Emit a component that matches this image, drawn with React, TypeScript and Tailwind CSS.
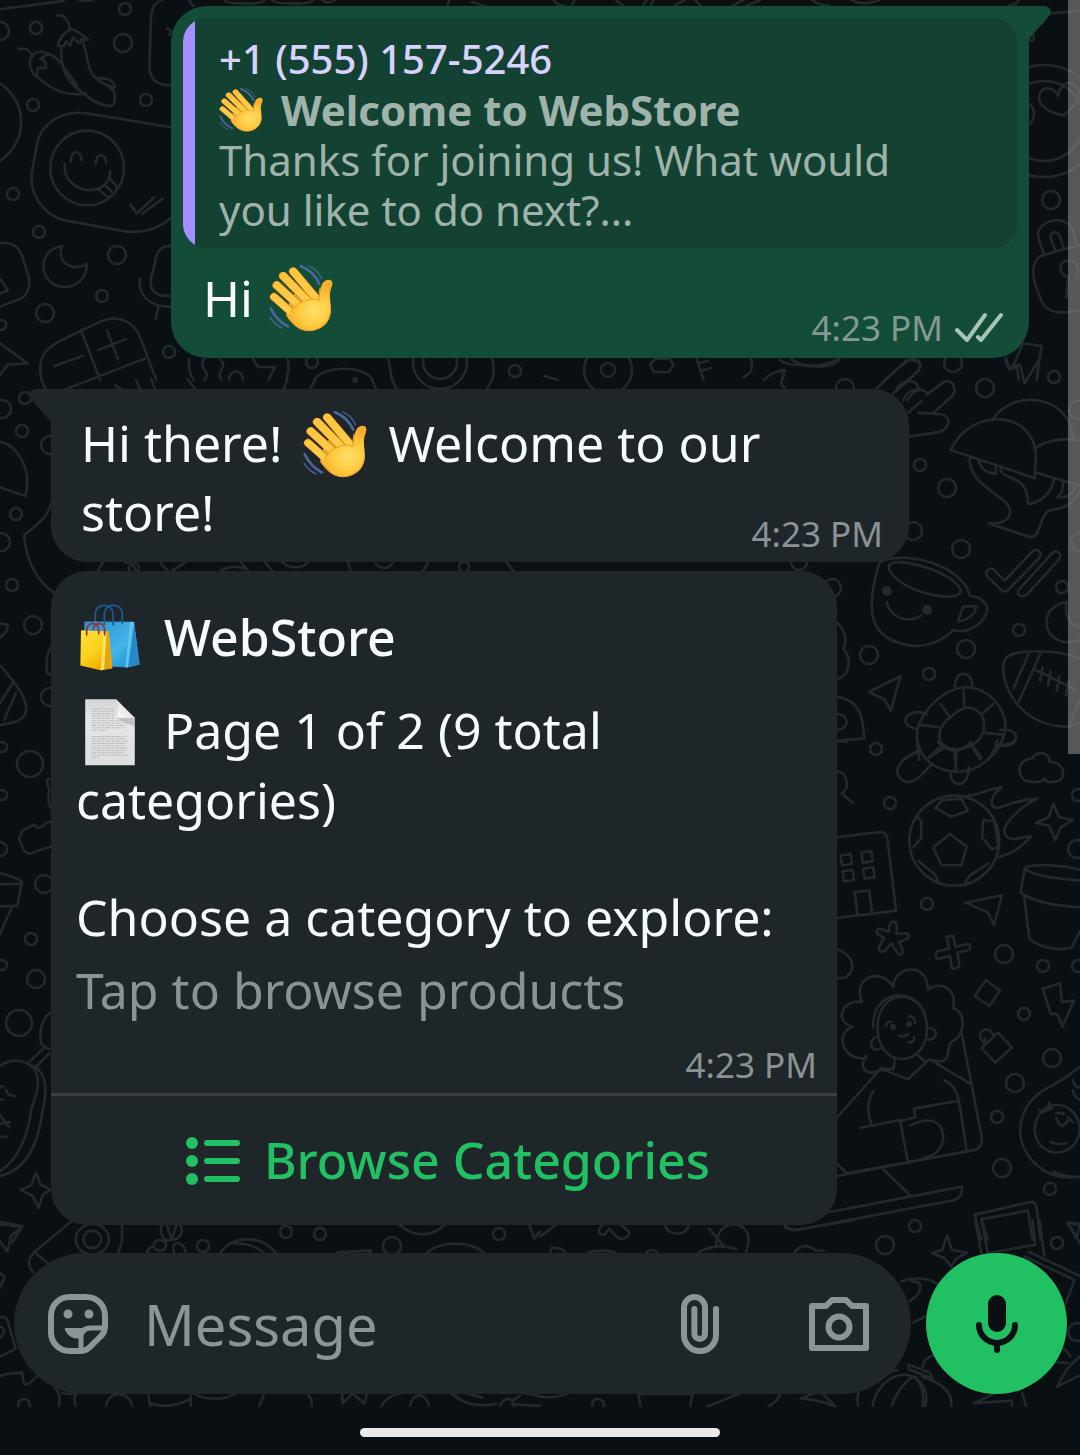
import React from "react";

const DOTS: [number, number, number][] = [
  [125, 9, 6], [36, 28, 6], [123, 43, 9], [0, 31, 9], [33, 105, 6], [146, 100, 6], [13, 194, 6],
  [39, 232, 6], [117, 255, 9], [102, 296, 6], [45, 313, 9], [169, 352, 6], [312, 362, 6], [1, 325, 5],
  [515, 371, 6], [1051, 200, 9], [608, 370, 7], [608, 370, 24], [953, 363, 9], [1054, 377, 6],
  [25, 398, 6], [2, 409, 9], [22, 431, 6], [50, 445, 9], [16, 514, 6], [1, 542, 9], [12, 585, 6],
  [33, 625, 9], [50, 697, 9], [30, 764, 13], [2, 747, 5], [2, 795, 5], [0, 849, 7], [44, 884, 9],
  [31, 939, 6], [36, 979, 9], [19, 1023, 13], [2, 965, 5], [985, 388, 9], [920, 465, 6], [947, 488, 9],
  [961, 549, 9], [913, 531, 9], [1062, 587, 6], [1019, 630, 6], [869, 655, 9], [966, 649, 9],
  [929, 674, 6], [876, 749, 6], [1078, 410, 9], [1080, 542, 9], [832, 588, 9], [845, 388, 9],
  [799, 562, 8], [890, 803, 6], [927, 904, 6], [1004, 954, 9], [1043, 966, 6], [1077, 849, 9],
  [1024, 1014, 6], [1052, 1058, 9], [1015, 1083, 9], [997, 1117, 6], [1002, 1168, 9], [1050, 1189, 6],
  [915, 1226, 6], [286, 1232, 6], [320, 1234, 6], [203, 1246, 6], [392, 1246, 9], [499, 1234, 6],
  [24, 1405, 6], [598, 1405, 6], [885, 1245, 9], [1057, 1243, 6], [1077, 1332, 9], [134, 568, 5],
  [464, 567, 5], [1078, 795, 6], [1078, 966, 6], [1044, 121, 56], [1044, 121, 40],
  [440, 362, 27], [440, 362, 17], [-25, 122, 46],
];

/* Each sheet is one area of the wallpaper, drawn on its own grid. */
const SHEETS: { at: string; lines: string[] }[] = [
  {
    at: "scale(.3444 .3333)",
    lines: [
      "M0 28L185 3M230 0q20 4 40 0M165 47c22-6 34 14 38 42M168 138c6-30 24-44 40-50 20 6 36 20 48 32l-20-2q-6 18-14 4l-10-10-8 24-12-12q-4 20-22 12zM178 145c-4 90 40 120 90 155 60 32 70 20 64-20-10-36-60-20-76-90-6-36-10-50-18-70M55 147c24-6 36 12 40 22M100 160c-20 16-18 48 6 70l4-26 24 0-4-20-12-8 22-14c-14-8-30-8-40-2zM108 230c40 40 90 60 142 50M140 162c30 6 60 60 84 98M286 235c30-4 50 14 46 28l-20-8",
      "M470 0c-24 6-30 26-32 60l-4 140c0 40 24 56 64 56M485 85l14 10-8 10M497 382L250 340c-70-10-130 30-142 90l-16 90c-6 70 40 130 100 142l170 32c60 8 100-10 135-40",
      "M146 504a107 112 0 1 0 214 0a107 112 0 1 0-214 0M205 486c2-38 30-38 32-6M278 492c2-34 28-34 30-4M188 490c-6 50 40 90 90 78 24-6 40-26 42-54M285 566l24 24c20 0 34-16 28-34l-18-20M302 552l22 22M378 614l20 26 50-48M412 642l60-46",
      "M180 738c-60 10-70 80-30 110 44 32 104 0 102-56-40 26-90-6-72-54zM0 730c40-6 58 14 66 44l18 60c6 34-10 60-34 66L0 920M0 836l24 36-24 8M0 1030l80 60-58 4-22 30M500 738c-36-4-48 24-50 50l-12 50c-4 40 20 52 60 50M406 836c-6 50 30 86 90 84M460 920l-8 36",
      "M120 1140c-10-60 0-90 60-120l100-50c60-30 110-10 130 50l44 120M235 990l56 150M135 1190l285-114M158 1098l82-30M285 1050l80-32M310 990l32 86M548 1077c0 30 4 50 14 63M592 1077c-18 40 24 30 2 63M640 1077c24 30-16 30 4 63M735 1077l14 24 50 0-20 39M835 1077c6 30 2 40-4 63M912 1140c20-40 140-50 170 0M1128 1077l10 63M1430 1077q6 30 0 63M665 1140c0-34 40-34 40 0",
      "M550 0q4 16 14 18M650 0q10 12 60 10 50 4 60-12M790 0q10 12 60 10 50 4 60-12M935 0q18 14 38 0M1300 17l4-17M1370 6l40 12",
    ],
  },
  {
    at: "translate(540) scale(.3444 .3333)",
    lines: [
      "M40 0q10 18 30 17M100 0q-4 10-8 17M220 0q18 16 24 17M310 0l-12 17M330 0l-10 17M420 0l-30 17M450 0l16 17M560 17l30-17M600 17l40-17M790 0q20 16 50 17M905 0q30 20 80 0M1360 17q20 0 30-17M1480 40l88-8M1421 120q20 8 10-20",
      "M1520 346c-50-8-84-40-66-70 14-22 40-10 50 12 4-30 30-50 50-34 24 20 2 66-34 92zM1421 312c16 10 18 40 2 60M1464 768l-18-60c-4-50 90-70 104-10l10 40M1496 752l-14-40c0-20 24-20 28 0l12 34M1568 734l-116 34c-20 20-24 40-16 80l22 60c20 34 60 34 110 22M1528 892l6-60c-30-10-30-46-4-50 30-4 40 24 26 50M1402 1030l54 8-14 102M1402 1030l-26 64M1352 1070l12 38 20-8 6 40M12 1128l40 12M320 1092l16-16h40l12 18-14 22-44 0zM455 1077l20 63M462 1090l26-8M470 1112l26-8M612 1077c10 30 0 44-20 54M730 1077c30 30 120 30 140 0M1000 1140l70-60c30-10 40 10 30 30l-30 30M650 1140q20-24 60-30l-6 30",
    ],
  },
  {
    at: "translate(0 370) scale(.3444 .3333)",
    lines: [
      "M0 214c50 14 94 80 74 164L0 352M148 400c-8 40-36 60-78 96 6 80 40 140 86 172M0 760l22 4c2 20-10 30-22 38M0 885c40 50 74 90 76 130 0 40-40 44-76 50M0 1000l36-60M12 1050l34-80M120 28l12 30M395 30l12 28M440 28l10 30M335 46l40 28M545 28l22 30M835 28l-12 30M900 58q6-12 16-28M1080 28l12 30M1138 28l14 30M1430 28l-18 30M285 602q6-14 14-25M395 602c-12-30-24-24-32-24M465 577l22 25M500 602l38-25M640 602q40-20 68-6M700 577l20 25M770 577l20 25M820 577c20 20 60 20 72 0M1010 577l8 25M1090 580q30 30 50 0M1228 602q10-10 14-25M1470 577l20 25M148 830q-20 40-10 80l14 6",
    ],
  },
  {
    at: "translate(780 360) scale(.3333)",
    lines: [
      "M0 0q20 16 60 14 60 10 110-14M0 36q16-14 10 14-14 20 4 34M290 85l90-85q30 0 40 10 0 20-12 30l-70 62M350 86c20-28 60-30 66 0-24 4-40 14-46 36M382 122c20-34 40-40 58-24M440 104l54-40c24-6 38 24 24 42l-56 52M384 158l40-34M386 230l80-12c50-6 50-56 10-56l-60-4M676 0l8 20 36-6 14 56 40-66M636 182c60-100 240-80 244 60M512 270c60-130 250-120 256 16l-4 68zM762 268c30-26 70-34 138-28M764 336l136 42M568 290c0 100 134 120 122 170-6 26-34 32-64 30l120 40c40 10 30-70 66-80 40-2 70-20 88-58M595 302c12 30 26 36 52 40l0-22M662 322c-6 44 82 10 82 110 40-4 70-34 78-72M850 366l-4 30-14 16q40 4 54-30",
      "M300 602c-50 160-30 240 100 256 40 2 90-14 120-48 60 16 110-40 100-72-14-24-30-30-50-30-20-90-190-140-270-102M326 620c10-40 214 20 216 76-20 40-206-10-216-76zM534 784l16-44 38-2c0 20-20 44-54 46zM320 726c12 50 68 66 104 40M620 648c-6-18 16-30 26-14l28 28 82-86c14-14 34 0 22 18L684 690c-6 6-16 6-20 0zM716 690l100-110c16-14 32 4 20 20L744 700c-18 18-36 4-28-10z",
      "M900 840c-70 24-110-24-98-70 6-20 30-42 58-44-8 40 8 70 40 74M900 896c-70-30-210-30-226 4-20 50 30 200 190 200l36-10M746 882l-46 104M782 880l-66 146M900 1020l-34 78M768 930l120 60M788 922l-8 40M812 934l-8 42M838 950l-8 42M866 964l-8 42M266 996l96-48-30 104-18-34zM170 786c24 24 34 50 20 80 26 30 22 80-20 92M170 1010c70 10 80 60 82 126l-80 6M170 1062c40 0 40 46 0 48M525 985c-4-60 52-54 52-8M442 1062c-70-24-90 40-30 44M660 1110c64-10 64 50 0 44M410 1130c0-60 70-140 140-148 80-6 140 80 124 136-10 40-30 60-50 82M410 1130l8 70M510 1072l24-18c44-30 90 10 76 60-12 40-60 60-100 52-54-20-30-70 0-94zM550 984l4 60M482 1032l30 42M640 1032l-36 32M416 1094l60 8M610 1118l60 6M484 1156l-42 42M574 1156l26 42M524 1172l0 28M368 1200l50-28",
    ],
  },
  {
    at: "translate(780 740) scale(.3333)",
    lines: [
      "M412 0c10 80 100 110 166 88 50-20 70-60 74-88M474 6c30 34 70 34 98 0M450 50l40-24M530 32l-4 60M574 12l30 40M420 30c-110 50-60 100-30 96 20-4 40-26 62-50M512 94c-4 50 54 56 54-12M652 14c30 10 50-2 56-14M172 4h30M736 122c-30-20-20-66 20-66 14-26 50-20 54 10 50 0 50 60 14 58-14 6-30 0-30-8-20 18-46 8-58 6zM170 94c34 4 40 50 16 66M186 160l32 28",
      "M388 302a134 134 0 1 0 270 0a134 134 0 1 0-270 0M488 180l56-4 20 36-50 18-48-26zM510 282l50 38-16 56-60 0-24-54zM610 240l34 4 12 78-20 6-30-36zM412 230l12 14 0 50-24 28M416 364l50 40 8 20M626 370l-56 36-14 20M556 168c40 0 60-20 108-26-40 34-36 70-2 60 34-14 70-24 110-26-70 36-140 110-70 122l52-10c-30 36-60 54-100 64M820 192l18 40 40 8-36 22-16 38-18-42-40-10 38-16zM170 292l130-16q18-2 22 20l26 216-178 22M182 346l30-4 4 30-30 4zM244 338l30-4 4 30-30 4zM188 394l30-4 4 30-30 4zM250 386l30-4 4 30-30 4zM232 522l-8-66 44-4 8 66M556 488l110-22-24 90-18-38zM900 390c-50-16-160-20-166-4 30 24 100 30 166 36M734 386l-12 72c40 30 110 40 178 44M732 464l16 132c34 30 90 36 126 28l26-50",
      "M334 548c8-8 18 0 16 12l0 22 26-2c14 0 14 14 4 18l-24 8 12 24c0 14-10 18-16 8l-18-28-18 22c-8 8-24 0-18-12l14-26-20-12c-6-12 2-18 12-14l22 8 2-20zM500 590l20-2 6 32 36-8c10 0 12 14 4 18l-34 8 6 34c0 14-14 14-22 14l-6-38-34 8c-12 0-10-20-2-22l34-8-8-36zM170 626c50 20 60 60 28 86l-28 4M618 720l42 32-32 46-44-30zM788 746l52-16 6 56 36-4-34 78-16-38-20 0zM604 924l50-46 42 44-50 46zM610 904c-24-20 0-44 20-32l12 14M616 896l-4 22",
      "M246 786c-30-70 50-110 94-46 0-60 100-80 104 8 50-30 90 10 74 56 40 10 40 80 2 98-16 6-14 30-18 50-14 20-34 10-50 8M246 786c-60-10-86 60-28 74-60 24-24 106 40 94M258 948c-30 50 20 60 46 40M293 876c-10-140 150-140 148-6-4 110-136 120-148 6zM280 862c-8-124 160-130 160 0M445 864c34 0 28 40-6 34M290 890c-30 10-16 50 10 36M318 858q6-18 16-12M386 830q18-4 20 20M356 886q16 8 28-4M386 908q18-2 16-16M344 960l-4 28-36-4-134 150M300 986l84 32 64-60 124 74M414 946l20 18M545 880l60 310c4 24-10 40-30 42L200 1300l-30-30M492 1020c30 14 46 40 48 90M280 1054c-20 30-20 60-6 98M240 1164l120-24 24 128M392 1156c50-24 90-20 98 30 0 40-20 60-60 68M360 1144l46-12-4-26 124-22c14-2 14 16 16 30l18 120M170 1308l400-76M310 1288l80 78M150 1416l396-76c2 20-4 34-22 40L60 1468c-20 6-36 0-46-8",
      "M900 980c-30 24-50 40-90 60-100 50-120 160-40 236 40 36 90 40 130 34M820 1296c20 10 50 14 80 16M764 1170c4-100 130-100 136 0-10 90-130 90-136 0zM778 1110q20 20 30-22M792 1114l24-10M828 1120q12-4 24 2M830 1134q10 40 34 8M862 1132q10 4 16 14M812 1206q20 10 46 4M878 1020q10 30 22 20M878 1050q4 20 22 30M604 1500l-20-76 168-38c12-2 16 6 18 20l12 94M624 1500l-20-62 140-26 14 88M862 1448l38 4-10 40z",
    ],
  },
  {
    at: "translate(0 560) scale(.3333 .4337)",
    lines: [
      "M155 505l-14 2q4 20 8 24-10 24 6 44M155 606c-10-4-20 0-26 8l-16 4-12-8-34 14-10 20 14 24c10 10 16 12 30 6l54-14M0 722q50 10 66 20l-14 56H0M0 748l66-2M34 804L0 862M155 1042c-24 10-34 30-34 60 0 16 14 24 34 26M84 1160l52-38M108 1168l40-30M84 1160q14 14 30 8M0 1166c40-20 80-10 100 4 26 30 10 60-6 96-10 60-40 120-94 142M100 1166c44 20 40 60 28 104-16 90-60 140-128 150M0 1214h10M18 1222q6 14 28 14M0 1244h10M0 1300l28-4M0 1280l28 28M0 1330h20M108 1412l14 28 30 12-24 12-12 30-18-28-38-14 34-10zM0 1532l66 6-30 36",
    ],
  },
  {
    at: "translate(0 1220) scale(.3444 .3333)",
    lines: [
      "M0 6l66 12-34 30-10 46-22-30M208 3L100 96c-20 20-20 40-4 60M100 96l38 34M220 58a48 46 0 1 0 96 0a48 46 0 1 0-96 0M242 58a26 26 0 1 0 52 0a26 26 0 1 0-52 0M354 15q4 50-10 82M470 15c-10 30 8 50 26 46 30-4 40-30 26-46M484 15l14 44 14-44M446 76a18 16 0 1 0 36 0a18 16 0 1 0-36 0M428 97q4-20 20-16M506 97c-14-40 28-34 34 0M640 97c40-54 120-50 160 0M670 70q60-4 94 27M980 97l98-6-4 6M1160 15c40 34 90 40 130 0M1240 97c40-34 120-36 164 0M1536 15l16 40 16-20M0 160q20 10 8 24l-8 20M0 292c20-4 22 6 26 24l20 70M0 320q24 6 0 34M0 410l46-24M0 468q30-10 64-10c4 30 4 44 24 30l18-18M160 506q20 16 10 54M220 520q-8 20 0 40M180 518q20 8 40 0M308 560c4-50 70-50 76 0M430 519l6 40M434 550q60 20 120-14M554 519v41M560 519c40 26 100 20 126 0M768 519l-16 41M890 519q20 20 14 41M994 519v32l30-30 34 30 8-32M1106 560q20-36 60-41M1190 560c10-50 50-40 56 0M1310 519q50 50 130 32M1350 519l50 14M1450 560q10-24 28-24 14 6 14 24M1490 540l20-12M1486 552l82 6M1520 519l48 10",
    ],
  },
  {
    at: "translate(540 1220) scale(.3444 .3333)",
    lines: [
      "M0 50L46 15M180 15c-16 20-8 30 8 28l12-16 30 30c20 0 30-10 30-20l-24-22M364 15c6 34 60 36 68 0M30 97l4-14 30 4 10 10M140 97q40-10 80 0M310 97q16-14 30 0M490 26l46 54M512 76c0-80 90-80 94-20q0 20-8 41M460 97q50-30 110-10M740 97q24-34 60-6l24 2M710 15q10 16 40 14l160-29M1182 46l14 44 44 8-32 18-14 24-20-26-36-14 30-10zM1264 0l18 104M1282 0l18 100M1430 0l8 74-140 26M1450 0l14 106M1420 96l148 72M1408 110l144 70-40 110M1532 10l36 6M1532 10l36 60M1050 184q60-20 102 6M1080 184c40 0 26 40-8 60M1084 308l36-20M1070 434l62 24 8 18-70-28zM1110 440q6-30 40-36M924 560q-10-60 30-90l84-20M966 560c10-80 90-120 130-80 24 20 30 50 22 80M1020 560q20-60 60-88M1090 470q30 40 20 90M1110 470c60 20 90 50 84 90M0 530q50 6 80-10M286 522h160M286 522l6 38M442 522l-6 38M484 560l100-41M664 560q30-20 34-41M758 536l40-17M758 536q50 2 100 24M820 519l38 41M1260 550l70-34M1260 550l110-8 0 18M1400 519l12 41M1568 410q-40 30-66 90l66-34M1500 370q30 20 40 40M1484 424q20 4 50 6",
    ],
  },
];

function Wallpaper() {
  return (
    <svg
      viewBox="0 0 1080 1407"
      aria-hidden="true"
      className="pointer-events-none absolute inset-x-0 top-0 w-full [&_*]:[vector-effect:non-scaling-stroke]"
      fill="none"
      stroke="#22282b"
      strokeWidth="2.6"
      strokeLinecap="round"
      strokeLinejoin="round"
    >
      {DOTS.map(([x, y, r], i) => (
        <circle key={i} cx={x} cy={y} r={r} />
      ))}
      {SHEETS.map((s) => (
        <g key={s.at} transform={s.at}>
          {s.lines.map((d) => (
            <path key={d} d={d} />
          ))}
        </g>
      ))}
      <g fill="#22282b" stroke="none">
        <circle cx="887" cy="591" r="5" />
        <circle cx="927" cy="610" r="5" />
        <circle cx="893" cy="1027" r="3" />
        <circle cx="909" cy="1024" r="3" />
        <circle cx="355" cy="380" r="3" />
      </g>
    </svg>
  );
}

function Wave({ className, id }: { className: string; id: string }) {
  const finger = `url(#${id}-finger)`;
  return (
    <svg viewBox="0 0 180 202" preserveAspectRatio="none" role="img" aria-label="waving hand" className={className}>
      <defs>
        <radialGradient id={`${id}-palm`} cx="128" cy="138" r="80" gradientUnits="userSpaceOnUse">
          <stop offset="0" stopColor="#ffe06a" />
          <stop offset="0.5" stopColor="#ffcd43" />
          <stop offset="1" stopColor="#f9ae2c" />
        </radialGradient>
        <linearGradient id={`${id}-finger`} x1="20" y1="30" x2="120" y2="150" gradientUnits="userSpaceOnUse">
          <stop offset="0" stopColor="#ffc240" />
          <stop offset="1" stopColor="#ffd04a" />
        </linearGradient>
      </defs>
      <g fill="none" stroke="#4a6698" strokeWidth="5" strokeLinecap="round">
        <path d="M90 4c24 10 40 26 51 52" strokeWidth="8" />
        <path d="M112 3c18 8 28 20 36 38" strokeWidth="4" />
        <path d="M5 131c12 26 26 42 48 54" strokeWidth="8" />
        <path d="M3 158c9 15 20 25 34 32" strokeWidth="4" />
      </g>
      <path
        d="M48 152L62 92l46-18 32 28c4-16 2-30 10-45 6-13 24-17 28-5 2 8-4 18-6 30-3 22 5 44 1 66-4 30-30 50-58 51-30 0-50-20-67-47z"
        fill={`url(#${id}-palm)`}
      />
      <g fill="none" strokeLinecap="round">
        <path d="M68 19L132 100" stroke="#c07a16" strokeWidth="25" />
        <path d="M68 19L132 100" stroke={finger} strokeWidth="22" />
        <path d="M40 33L112 112" stroke="#c07a16" strokeWidth="26" />
        <path d="M40 33L112 112" stroke={finger} strokeWidth="22" />
        <path d="M22 61L88 126" stroke="#c07a16" strokeWidth="26" />
        <path d="M22 61L88 126" stroke={finger} strokeWidth="22" />
        <path d="M14 96L70 148" stroke="#c07a16" strokeWidth="24" />
        <path d="M14 96L72 152" stroke={finger} strokeWidth="21" />
      </g>
      <path
        d="M57 150c8-20 26-38 48-44 12-4 26-6 35-1 6 12 2 22 12 32l16 24c-8 22-30 36-53 36-26 0-44-20-58-47z"
        fill={`url(#${id}-palm)`}
      />
      <path d="M62 142c8-18 24-30 44-36 12-4 24-4 32 0 4-14 2-26 6-38" fill="none" stroke="#eea22b" strokeWidth="3" />
      <path d="M60 164c18 30 52 46 84 24 20-14 28-34 29-54" fill="none" stroke="#f0a02c" strokeWidth="3" />
    </svg>
  );
}

function Bags() {
  return (
    <svg viewBox="0 0 180 200" role="img" aria-label="shopping bags" className="h-[67px] w-[60px] shrink-0">
      <defs>
        <linearGradient id="bag-blue" x2="1" y2="1">
          <stop offset="0" stopColor="#2d8dca" />
          <stop offset="0.6" stopColor="#43b5ea" />
          <stop offset="1" stopColor="#1c86c7" />
        </linearGradient>
        <linearGradient id="bag-gold" x2="0.6" y2="1">
          <stop offset="0" stopColor="#ffdf3c" />
          <stop offset="0.6" stopColor="#fcd11c" />
          <stop offset="1" stopColor="#f3a300" />
        </linearGradient>
      </defs>
      <g fill="none" stroke="#1b5a93" strokeWidth="5">
        <path d="M46 60V30C46-5 99-5 99 30V60" />
        <path d="M73 60V30C73-5 127-5 127 30V60" />
      </g>
      <path d="M13 52l149 1 17 128-36 9-63-4-67-40z" fill="url(#bag-blue)" />
      <path d="M162 53l17 128-36 9z" fill="#2589c8" />
      <path d="M150 53l-14 136 8 1 18-136z" fill="#5cc2ee" />
      <g fill="none" stroke="#1b5a93" strokeWidth="5">
        <path d="M99 50V64M73 50V62M127 50V60" />
      </g>
      <path d="M3 78l83 4 11 110-35 6-61-14z" fill="url(#bag-gold)" />
      <path d="M86 82l11 110-35 6 8-112z" fill="#e8a50b" />
      <path d="M70 84L62 198l10-2 8-112z" fill="#ffe35a" />
      <g fill="none" stroke="#a42a22" strokeWidth="5">
        <path d="M20 94V78c0-26 36-26 36 0v12" />
        <path d="M40 78c0-26 34-26 34 0v16" />
      </g>
    </svg>
  );
}

function Page() {
  const rows = [30, 37, 44, 51, 58, 65, 72, 79, 86, 93, 112, 119, 126, 133, 140, 147, 154, 161, 168, 175];
  return (
    <svg viewBox="0 0 148 200" role="img" aria-label="page" className="mr-6 ml-1 inline-block h-[67px] w-[60px] align-[-17px]">
      <defs>
        <linearGradient id="sheet" y2="1" x2="0">
          <stop offset="0" stopColor="#d4d4d4" />
          <stop offset="0.3" stopColor="#e6e6e6" />
          <stop offset="1" stopColor="#dedede" />
        </linearGradient>
        <linearGradient id="fold" x1="0" y1="1" x2="0.6" y2="0.3">
          <stop offset="0" stopColor="#ffffff" />
          <stop offset="1" stopColor="#dddddd" />
        </linearGradient>
      </defs>
      <path d="M0 1h92l56 56v141H0z" fill="url(#sheet)" />
      <path d="M90 56h58v26z" fill="#a8a8a8" opacity=".6" />
      <path d="M92 1q8 20 5 55 26-2 51 1z" fill="url(#fold)" />
      {rows.map((y, i) => (
        <path
          key={y}
          d={`M19 ${y}H${i === 9 ? 64 : i === 19 ? 40 : i < 5 ? 86 : 128 - (i % 3) * 5}`}
          stroke="#b5b5b5"
          strokeWidth="2.5"
          strokeDasharray={i % 2 ? "14 3 9 2" : "8 2 17 3"}
        />
      ))}
    </svg>
  );
}

function Time({ className = "text-[#8a9296]" }: { className?: string }) {
  return <time className={`text-[35px] leading-10 ${className}`}>4:23 PM</time>;
}

export default function App() {
  return (
    <div className="relative flex min-h-screen flex-col overflow-hidden bg-[#0a0f13] font-['Noto_Sans',sans-serif] text-[50px] leading-[69px] text-[#f7f9fa]">
      <Wallpaper />
      <div className="absolute top-0 right-0 z-10 h-[754px] w-3 bg-[#85888b]/60" />

      <main className="relative flex flex-col items-start pt-[6px] pr-[51px] pl-[51px]">
        <article className="relative ml-[120px] self-stretch rounded-[36px] rounded-tr-none bg-[#144d37] p-3 pb-[10px]">
          <svg viewBox="0 0 24 36" aria-hidden="true" className="absolute top-0 left-full -ml-[2px] h-9 w-6" fill="#144d37">
            <path d="M0 0h18q8 2 5 9L2 33v3H0z" />
          </svg>
          <blockquote className="flex overflow-hidden rounded-3xl bg-[#144232] text-[42px] leading-[50px] text-[#a0b3ab]">
            <div className="w-3 shrink-0 bg-[#a58fff]" />
            <div className="min-w-0 pt-[15px] pr-4 pb-[13px] pl-6">
              <div className="text-[40px] leading-[52px] font-medium text-[#d8d2ff]">+1 (555) 157-5246</div>
              <div className="flex items-center gap-[18px] font-bold">
                <Wave id="wave-quote" className="h-11 w-11" />
                Welcome to WebStore
              </div>
              <p>
                Thanks for joining us! What would
                <br />
                you like to do next?...
              </p>
            </div>
          </blockquote>
          <div className="flex items-end justify-between pr-[14px] pl-5">
            <p className="flex h-[100px] items-center gap-4">
              Hi
              <Wave id="wave-hi" className="h-[67px] w-16" />
            </p>
            <div className="flex items-center gap-3">
              <Time className="text-[#84998f]" />
              <svg viewBox="0 0 48 32" role="img" aria-label="Delivered" className="h-8 w-12" fill="none" stroke="#a5c6b4" strokeWidth="4" strokeLinecap="round" strokeLinejoin="round">
                <path d="M2 18l10 10L30 3M23 25l3 3L46 3" />
              </svg>
            </div>
          </div>
        </article>

        <article className="relative mt-[31px] mr-[120px] self-stretch rounded-[36px] rounded-tl-none bg-[#1f2629] pt-5 pr-6 pb-[15px] pl-[30px]">
          <svg viewBox="0 0 24 36" aria-hidden="true" className="absolute top-0 right-full -mr-[2px] h-9 w-6" fill="#1f2629">
            <path d="M24 0H6q-8 2-5 9L22 33v3h2z" />
          </svg>
          <p>
            Hi there! <Wave id="wave-hello" className="mr-2 ml-2 inline-block h-[67px] w-16 align-[-16px]" /> Welcome to our
            <br />
            store!
          </p>
          <Time className="absolute right-[26px] bottom-2 text-[#8a9296]" />
        </article>

        <article className="mt-[9px] w-[786px] max-w-full overflow-hidden rounded-[36px] bg-[#1f2629]">
          <div className="px-[25px] pt-8">
            <h2 className="flex items-center gap-6 pl-1 font-medium">
              <Bags />
              WebStore
            </h2>
            <p className="mt-6">
              <Page />
              Page 1 of 2 (9 total
              <br />
              categories)
            </p>
            <p className="mt-12">Choose a category to explore:</p>
            <p className="mt-1 text-[#8a9296]">Tap to browse products</p>
          </div>
          <div className="mt-5 flex justify-end pr-5 pb-2">
            <Time />
          </div>
          <button type="button" className="flex h-[132px] w-full items-center justify-center gap-6 border-t-[3px] border-[#383e42] pl-2 font-medium text-[#21c063]">
            <svg viewBox="0 0 54 48" aria-hidden="true" className="h-12 w-[54px]" fill="currentColor">
              <circle cx="6" cy="6" r="6" />
              <circle cx="6" cy="24" r="6" />
              <circle cx="6" cy="42" r="6" />
              <rect x="18" y="3" width="36" height="6" rx="3" />
              <rect x="18" y="21" width="36" height="6" rx="3" />
              <rect x="18" y="39" width="36" height="6" rx="3" />
            </svg>
            Browse Categories
          </button>
        </article>
      </main>

      <form className="relative mt-7 flex items-center gap-[15px] pr-[13px] pl-[14px]" onSubmit={(e) => e.preventDefault()}>
        <div className="flex h-[141px] min-w-0 flex-1 items-center rounded-full bg-[#1f2629] pr-[41px] pl-[34px] text-[#8b9498]">
          <button type="button" aria-label="Stickers" className="shrink-0">
            <svg viewBox="0 0 60 60" className="size-[60px]" fill="none" stroke="currentColor" strokeWidth="6" strokeLinejoin="round">
              <path d="M57 33V22C57 11 49 3 38 3H22C11 3 3 11 3 22v16c0 11 8 19 19 19h11q5 0 9-4l11-11q4-4 4-9z" />
              <path d="M56 34H43q-10 0-10 10v12" strokeWidth="5" />
              <circle cx="20" cy="20" r="4.5" fill="currentColor" stroke="none" />
              <circle cx="41" cy="20" r="4.5" fill="currentColor" stroke="none" />
              <path d="M18 34h22q-8 3-8 10c-7 2-13-3-15-8q-1-2 1-2z" fill="currentColor" stroke="none" />
            </svg>
          </button>
          <input aria-label="Message" placeholder="Message" className="ml-9 h-20 min-w-0 flex-1 bg-transparent text-[56px] text-[#f7f9fa] outline-none placeholder:text-[#8b9498]" />
          <button type="button" aria-label="Attach" className="mr-[89px] shrink-0">
            <svg viewBox="0 0 38 60" className="h-[60px] w-[38px]" fill="none" stroke="currentColor" strokeWidth="6" strokeLinecap="round">
              <path d="M35 15v26a16 16 0 0 1-32 0V13.5a10.5 10.5 0 0 1 21 0v26.2a5.3 5.3 0 0 1-10.6 0V15" />
            </svg>
          </button>
          <button type="button" aria-label="Camera" className="shrink-0">
            <svg viewBox="0 0 62 56" className="h-14 w-[62px]" fill="none" stroke="currentColor" strokeWidth="6" strokeLinejoin="round">
              <path d="M4 10h14l6-6h14l6 6h14v42H4z" />
              <circle cx="31" cy="31" r="10.5" />
            </svg>
          </button>
        </div>
        <button type="button" aria-label="Record voice message" className="flex size-[141px] shrink-0 items-center justify-center rounded-full bg-[#21c063] text-[#0a0f13]">
          <svg viewBox="0 0 42 58" className="h-[58px] w-[42px]" fill="none" stroke="currentColor" strokeWidth="6" strokeLinecap="round">
            <rect x="12" y="0" width="18" height="37" rx="9" fill="currentColor" stroke="none" />
            <path d="M3 30a18 18 0 0 0 36 0M21 48v7" />
          </svg>
        </button>
      </form>

      <div className="relative mx-auto mt-[34px] mb-[18px] h-[9px] w-1/3 rounded-full bg-[#e9e9e9]" />
    </div>
  );
}
